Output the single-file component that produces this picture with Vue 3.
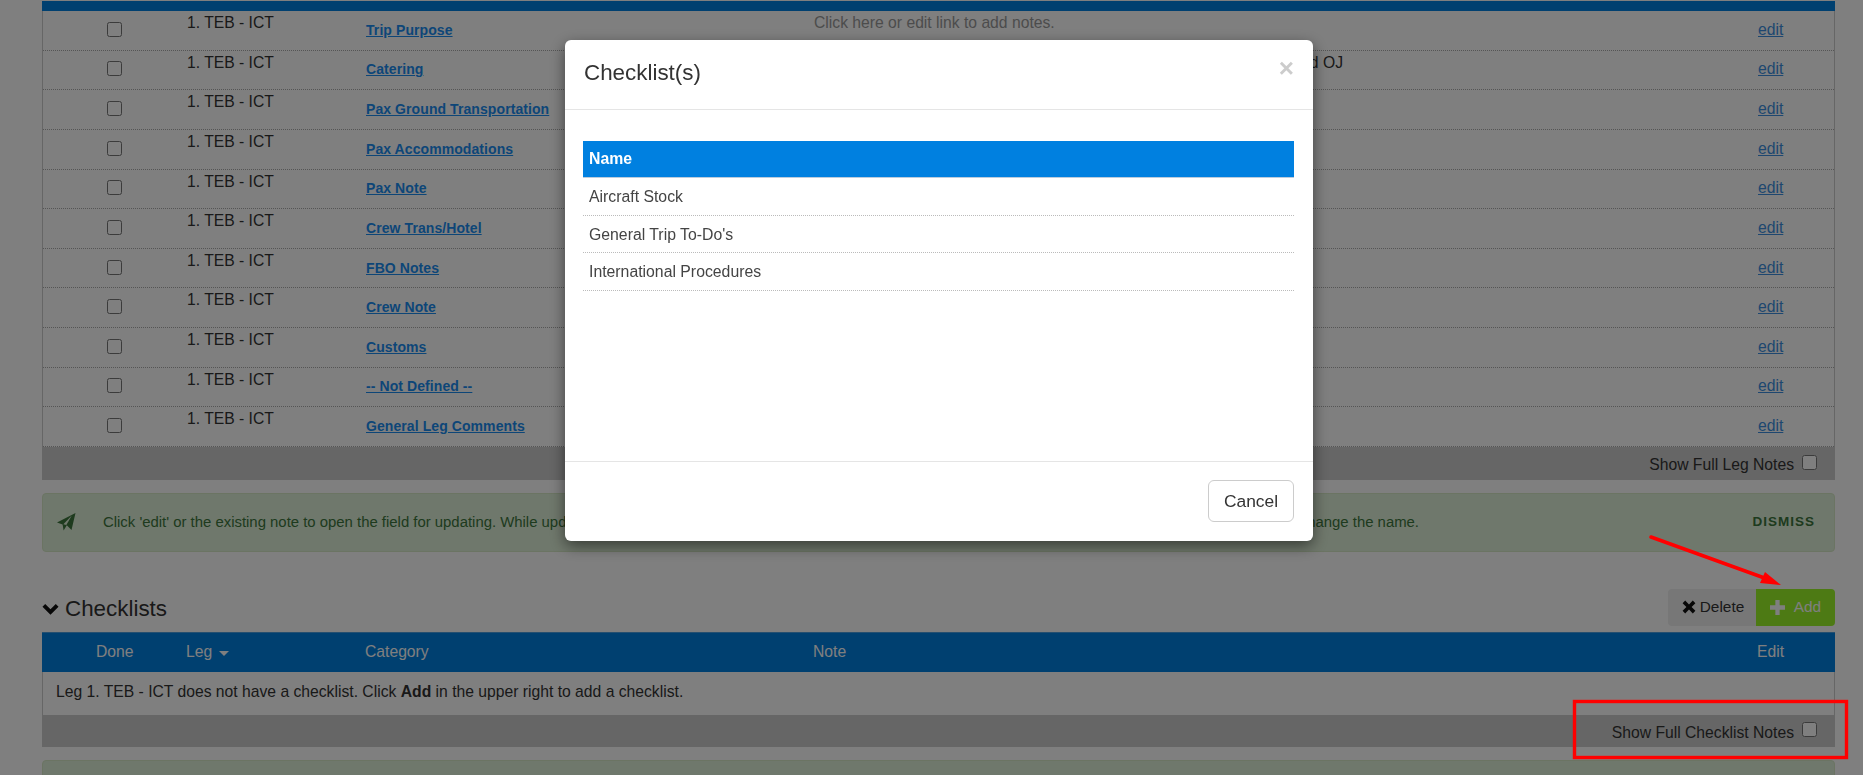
<script setup>
const categories = [
  { name: 'Trip Purpose', note: 'Click here or edit link to add notes.', empty: true },
  { name: 'Catering', note: 'and OJ', right: true },
  { name: 'Pax Ground Transportation' },
  { name: 'Pax Accommodations' },
  { name: 'Pax Note' },
  { name: 'Crew Trans/Hotel' },
  { name: 'FBO Notes' },
  { name: 'Crew Note' },
  { name: 'Customs' },
  { name: '-- Not Defined --' },
  { name: 'General Leg Comments' }
]
const checklists = ['Aircraft Stock', "General Trip To-Do's", 'International Procedures']
</script>

<template>
  <div class="page">
    <section class="table">
      <div class="head-stub"></div>
      <div v-for="c in categories" :key="c.name" class="row">
        <div class="cell-check"><input type="checkbox" /></div>
        <div class="cell-top">1. TEB - ICT</div>
        <div class="cell-mid"><a class="cat" href="#">{{ c.name }}</a></div>
        <div class="cell-top" :class="{ muted: c.empty }">
          <span :class="{ 'note-right': c.right }">{{ c.note }}</span>
        </div>
        <div class="cell-mid"><a class="edit" href="#">edit</a></div>
      </div>
      <div class="band"><span>Show Full Leg Notes</span><input type="checkbox" /></div>
    </section>

    <div class="alert">
      <svg class="plane" viewBox="0 0 20 20" width="20" height="20">
        <path d="M19.5 1 15.5 18 10.8 13.2 7.6 18.6 6.6 12.4 1 10.6Z" fill="currentColor" />
        <path d="M15.8 3.6 7.4 12.2 10.3 13Z" fill="#dff0d8" />
      </svg>
      <p class="alert-text">
        <span>Click 'edit' or the existing note to open the field for updating. While updating, click Save to keep the note.</span>
        <span>Use the category link to change the name.</span>
      </p>
      <a class="dismiss" href="#">DISMISS</a>
    </div>

    <header class="section-head">
      <h2>
        <svg viewBox="0 0 18 14" width="17" height="14">
          <path d="M0.5 4.6 3.4 1.7 9 7.3 14.6 1.7 17.5 4.6 9 13Z" fill="currentColor" />
        </svg>
        Checklists
      </h2>
      <div class="actions">
        <button class="btn-delete" type="button">
          <svg viewBox="0 0 14 14" width="14" height="14">
            <path d="M3.2 0.6 7 4.4 10.8 0.6 13.4 3.2 9.6 7 13.4 10.8 10.8 13.4 7 9.6 3.2 13.4 0.6 10.8 4.4 7 0.6 3.2Z" fill="currentColor" />
          </svg>
          Delete
        </button>
        <button class="btn-add" type="button">
          <svg viewBox="0 0 14 14" width="15" height="15">
            <path d="M5 0H9V5H14V9H9V14H5V9H0V5H5Z" fill="currentColor" />
          </svg>
          <span>Add</span>
        </button>
      </div>
    </header>

    <section class="table">
      <div class="head">
        <div class="head-done">Done</div>
        <div>Leg <i class="caret"></i></div>
        <div>Category</div>
        <div>Note</div>
        <div>Edit</div>
      </div>
      <div class="empty-row">Leg 1. TEB - ICT does not have a checklist. Click <b>Add</b> in the upper right to add a checklist.</div>
      <div class="band band-checklist"><span>Show Full Checklist Notes</span><input type="checkbox" /></div>
    </section>

    <div class="alert"></div>

    <div class="backdrop"></div>

    <div class="modal">
      <div class="modal-head">
        <h3>Checklist(s)</h3>
        <button class="close" type="button">×</button>
      </div>
      <div class="modal-body">
        <div class="list-head">Name</div>
        <div v-for="item in checklists" :key="item" class="list-row">{{ item }}</div>
      </div>
      <div class="modal-foot">
        <button class="cancel" type="button">Cancel</button>
      </div>
    </div>

    <svg class="annotations" width="1863" height="775" viewBox="0 0 1863 775">
      <line x1="1651" y1="537" x2="1770" y2="580" stroke="#ff0000" stroke-width="3.6" stroke-linecap="round" />
      <path d="M1781 585 1760 583 1765 572Z" fill="#ff0000" />
      <rect x="1574.5" y="701.5" width="272" height="56" fill="none" stroke="#ff0000" stroke-width="3.4" />
    </svg>
  </div>
</template>

<style>
html, body {
  margin: 0;
  overflow: hidden;
}
</style>

<style scoped>
.page {
  box-sizing: border-box;
  height: 775px;
  overflow: hidden;
  padding: 1px 28px 0 42px;
  background: #fff;
  color: #333;
  font-family: "Liberation Sans", Arial, sans-serif;
  font-size: 15.7px;
  line-height: 20px;
}
.table {
  border: 1px solid #ccc;
  border-width: 0 1px;
}
.head-stub {
  height: 10px;
  margin: 0 -1px;
  background: #0080e0;
}
.row,
.head {
  display: grid;
  grid-template-columns: 144px 179px 448px 944px 1fr;
}
.row {
  box-sizing: border-box;
  height: 39.64px;
  border-bottom: 1px dotted #aaa;
}
.cell-check {
  display: flex;
  align-items: center;
  padding: 0 0 2px 64px;
}
.cell-check input {
  width: 15px;
  height: 15px;
  margin: 0;
}
.cell-top {
  padding-top: 2px;
}
.cell-mid {
  display: flex;
  align-items: center;
  padding-bottom: 1px;
}
.muted {
  color: #999;
}
.note-right {
  display: block;
  width: 529px;
  text-align: right;
  white-space: nowrap;
}
.cat {
  color: #1a8cf0;
  font-size: 14px;
  font-weight: 700;
  letter-spacing: 0.08px;
}
.edit {
  color: #3c8fe0;
}
.band {
  display: flex;
  justify-content: flex-end;
  align-items: center;
  gap: 8px;
  box-sizing: border-box;
  height: 33px;
  margin: 0 -1px;
  padding: 4px 18px 0 0;
  background: #ccc;
}
.band input {
  width: 15px;
  height: 15px;
  margin: 0;
  transform: translateY(-3px);
}
.band-checklist {
  height: 32px;
}
.alert {
  display: flex;
  align-items: center;
  box-sizing: border-box;
  height: 59px;
  margin-top: 13px;
  padding: 0 19px 0 13px;
  border: 1px solid #d6e9c6;
  border-radius: 4px;
  background: #dff0d8;
  color: #3c763d;
}
.plane {
  flex: none;
  margin-right: 27px;
}
.alert-text {
  display: flex;
  justify-content: space-between;
  width: 1316px;
  margin: 0;
  font-size: 14.9px;
  white-space: nowrap;
}
.dismiss {
  margin-left: auto;
  color: #3c763d;
  font-size: 13.5px;
  font-weight: 700;
  letter-spacing: 1px;
  text-decoration: none;
}
.section-head {
  display: flex;
  justify-content: space-between;
  margin: 37px 0 6px;
}
.section-head h2 {
  display: flex;
  align-items: center;
  gap: 6px;
  margin: 3px 0 0;
  color: #333;
  font-size: 22.4px;
  font-weight: 400;
}
.section-head h2 svg {
  color: #111;
}
.actions {
  display: flex;
  height: 37px;
}
.actions button {
  display: flex;
  align-items: center;
  border: 0;
  font: inherit;
  font-size: 15.4px;
}
.btn-delete {
  gap: 4px;
  width: 88px;
  padding: 0 0 0 2px;
  justify-content: center;
  border-radius: 4px 0 0 4px;
  background: #eee;
  color: #333;
}
.btn-delete svg {
  color: #111;
}
.btn-add {
  gap: 9px;
  width: 79px;
  justify-content: center;
  border-radius: 0 4px 4px 0;
  background: #9af428;
  color: #fff;
}
.head {
  height: 39px;
  margin: 0 -1px;
  align-items: center;
  border-top: 1px solid #4a9fe0;
  background: #0080e0;
  color: #fff;
}
.head-done {
  padding-left: 54px;
}
.caret {
  display: inline-block;
  margin-left: 2px;
  vertical-align: middle;
  border-top: 5px solid #fff;
  border-left: 5px solid transparent;
  border-right: 5px solid transparent;
}
.empty-row {
  height: 43px;
  padding-left: 13px;
  line-height: 40px;
  box-sizing: border-box;
}
.backdrop {
  position: fixed;
  inset: 0;
  background: rgba(0, 0, 0, 0.5);
}
.modal {
  position: fixed;
  top: 40px;
  left: 565px;
  display: flex;
  flex-direction: column;
  box-sizing: border-box;
  width: 748px;
  height: 501px;
  border-radius: 6px;
  background: #fff;
  box-shadow: 0 5px 15px rgba(0, 0, 0, 0.5);
}
.modal-head {
  display: flex;
  justify-content: space-between;
  box-sizing: border-box;
  height: 70px;
  padding: 0 19px 0 19px;
  border-bottom: 1px solid #e5e5e5;
}
.modal-head h3 {
  margin: 21px 0 0;
  color: #333;
  font-size: 22.4px;
  font-weight: 400;
  line-height: 24px;
}
.close {
  height: 24px;
  margin-top: 16px;
  padding: 0;
  border: 0;
  background: none;
  color: #ccc;
  font-family: inherit;
  font-size: 26px;
  font-weight: 700;
  line-height: 24px;
}
.modal-body {
  flex: 1;
  padding: 31px 19px 0 18px;
  font-size: 15.8px;
}
.list-head {
  box-sizing: border-box;
  height: 37px;
  padding-left: 6px;
  background: #0080e0;
  color: #fff;
  font-weight: 700;
  line-height: 36px;
  border-bottom: 1px solid #bcd;
}
.list-row {
  box-sizing: border-box;
  height: 37.7px;
  padding-left: 6px;
  border-bottom: 1px dotted #bbb;
  color: #444;
  line-height: 38px;
}
.modal-foot {
  display: flex;
  justify-content: flex-end;
  box-sizing: border-box;
  height: 80px;
  padding: 18px 19px 0 0;
  border-top: 1px solid #e5e5e5;
}
.cancel {
  box-sizing: border-box;
  width: 86px;
  height: 42px;
  border: 1px solid #ccc;
  border-radius: 6px;
  background: #fff;
  color: #333;
  font-family: inherit;
  font-size: 17.4px;
}
.annotations {
  position: fixed;
  inset: 0;
  pointer-events: none;
}
</style>
